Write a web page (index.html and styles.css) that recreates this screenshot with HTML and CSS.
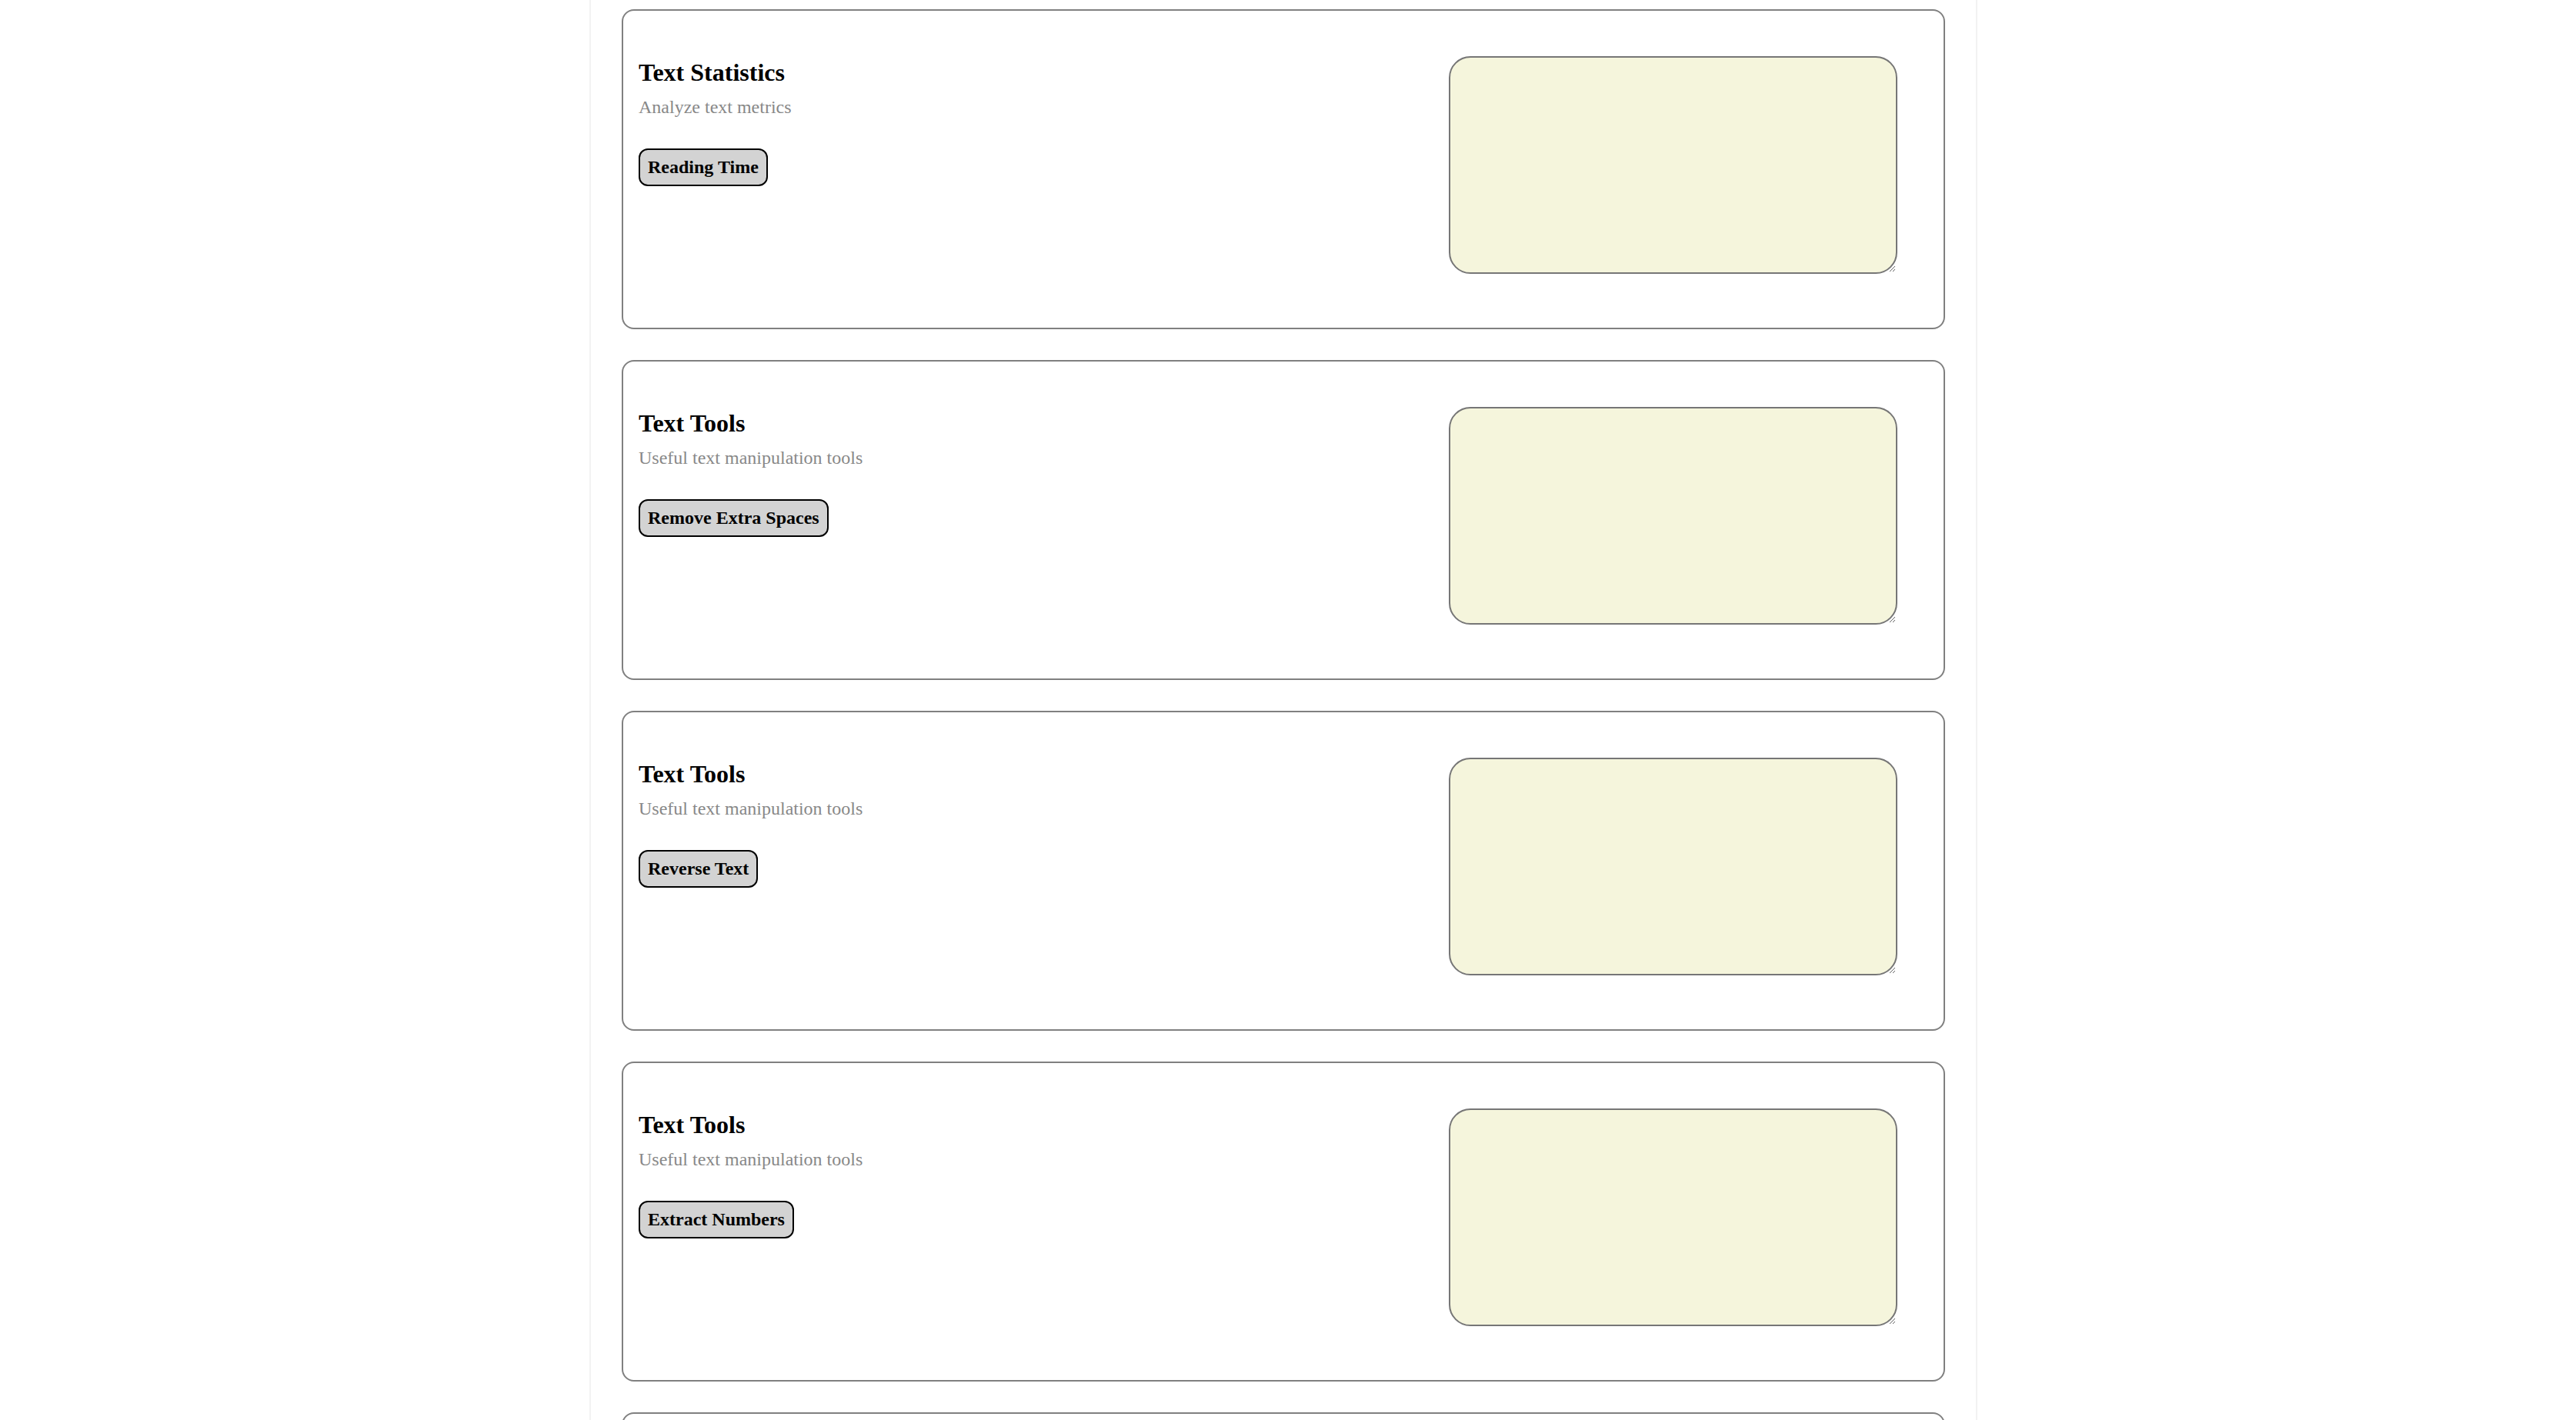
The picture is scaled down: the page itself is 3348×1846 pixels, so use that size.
FILE: index.html
```html
<!DOCTYPE html>
<html lang="en">
<head>
<meta charset="utf-8">
<title>Text Tools</title>
<link rel="stylesheet" href="styles.css">
</head>
<body>
<main class="container">
  <section class="card">
    <div class="info">
      <h4 class="title">Text Statistics</h4>
      <p class="desc">Analyze text metrics</p>
      <button class="btn">Reading Time</button>
    </div>
    <textarea class="area"></textarea>
  </section>
  <section class="card">
    <div class="info">
      <h4 class="title">Text Tools</h4>
      <p class="desc">Useful text manipulation tools</p>
      <button class="btn">Remove Extra Spaces</button>
    </div>
    <textarea class="area"></textarea>
  </section>
  <section class="card">
    <div class="info">
      <h4 class="title">Text Tools</h4>
      <p class="desc">Useful text manipulation tools</p>
      <button class="btn">Reverse Text</button>
    </div>
    <textarea class="area"></textarea>
  </section>
  <section class="card">
    <div class="info">
      <h4 class="title">Text Tools</h4>
      <p class="desc">Useful text manipulation tools</p>
      <button class="btn">Extract Numbers</button>
    </div>
    <textarea class="area"></textarea>
  </section>
  <section class="card">
    <div class="info"></div>
    <textarea class="area"></textarea>
  </section>
</main>
</body>
</html>
```
FILE: styles.css
```css
html, body {
  margin: 0;
  background: #ffffff;
}
body {
  padding-right: 12px;
  font-family: "Liberation Serif", "Times New Roman", serif;
  color: #000;
}
.container {
  box-sizing: border-box;
  width: 1804px;
  margin: 0 auto;
  padding: 12px 40px 40px;
  border-left: 2px solid #f2f2f2;
  border-right: 2px solid #f2f2f2;
  display: flex;
  flex-direction: column;
  gap: 40px;
}
.card {
  box-sizing: border-box;
  height: 416px;
  border: 2px solid #808080;
  border-radius: 16px;
  padding: 20px;
  display: flex;
  justify-content: space-between;
  align-items: flex-start;
  flex-shrink: 0;
}
.info {
  display: flex;
  flex-direction: column;
  align-items: flex-start;
}
.title {
  margin: 42px 0 13px;
  font-size: 32px;
  font-weight: bold;
  line-height: normal;
}
.desc {
  margin: 0 0 40px;
  font-size: 24px;
  color: #888888;
  line-height: normal;
}
.btn {
  font-family: "Liberation Serif", "Times New Roman", serif;
  font-size: 24px;
  font-weight: bold;
  color: #000;
  background: #d3d3d3;
  border: 2px solid #000;
  border-radius: 12px;
  padding: 9px 10px;
  line-height: normal;
}
.area {
  box-sizing: border-box;
  width: 583px;
  height: 283px;
  margin: 39px 40px 0 0;
  background: #f5f5dc;
  border: 2px solid #767676;
  border-radius: 28px;
  font-family: "Liberation Serif", serif;
  font-size: 26px;
}
```
